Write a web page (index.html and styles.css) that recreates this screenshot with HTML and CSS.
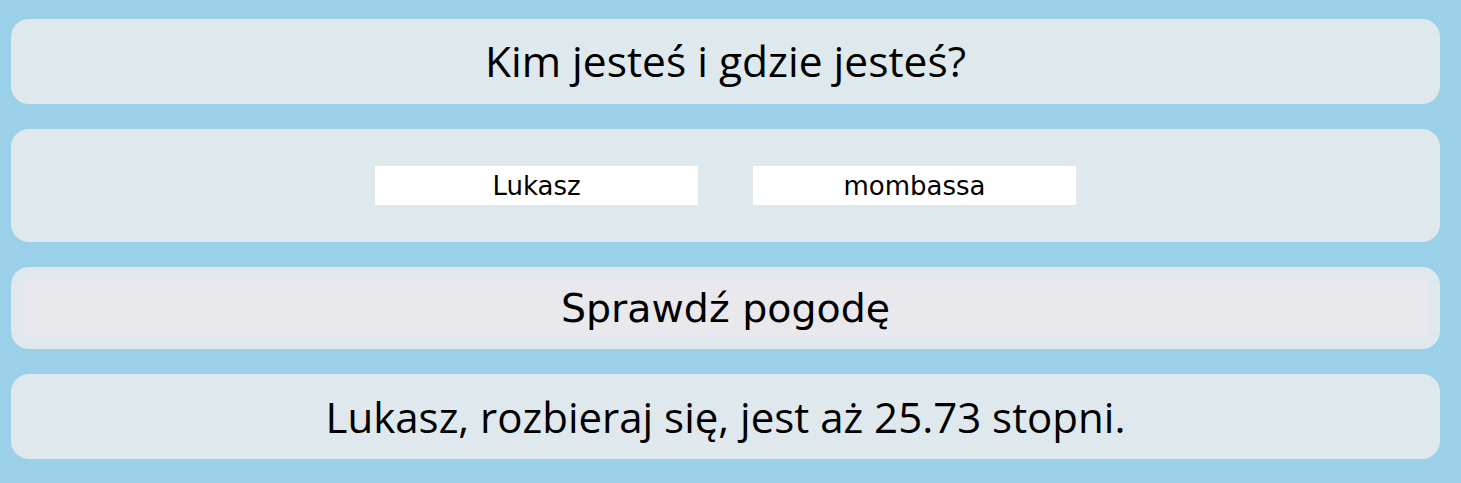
FILE: index.html
```html
<!DOCTYPE html>
<html lang="pl">
<head>
<meta charset="utf-8">
<title>Pogoda</title>
<link rel="stylesheet" href="styles.css">
</head>
<body>
<main class="app">
  <section class="card card-title">
    <h1 class="title">Kim jesteś i gdzie jesteś?</h1>
  </section>
  <section class="card card-form">
    <input class="field" type="text" value="Lukasz">
    <input class="field" type="text" value="mombassa">
  </section>
  <section class="card card-button">
    <button class="check" type="button">Sprawdź pogodę</button>
  </section>
  <section class="card card-result">
    <p class="result">Lukasz, rozbieraj się, jest aż 25.73 stopni.</p>
  </section>
</main>
</body>
</html>
```
FILE: styles.css
```css
html, body {
  margin: 0;
  padding: 0;
  background: #9ad1e8;
}
.app {
  display: flex;
  flex-direction: column;
  gap: 25px;
  padding: 19px 21px 24px 11px;
}
.card {
  background: #dfe8ec;
  border-radius: 18px;
  display: flex;
  align-items: center;
  justify-content: center;
}
.card-title { height: 85px; }
.card-form { height: 113px; gap: 55px; }
.card-button { height: 82px; padding: 13px; box-sizing: border-box; }
.card-result { height: 85px; }
.title, .result {
  margin: 0;
  font-family: "Open Sans", "Noto Sans", sans-serif;
  font-weight: 400;
  font-size: 42px;
  color: #000;
  line-height: 1;
}
.title { font-size: 42.5px; }
.field {
  width: 323px;
  height: 39px;
  box-sizing: border-box;
  border: none;
  outline: none;
  background: #fff;
  text-align: center;
  font-family: "DejaVu Sans", sans-serif;
  font-size: 26px;
  color: #000;
  padding: 0;
}
.check {
  width: 100%;
  height: 100%;
  border: none;
  background: #e8e8ed;
  font-family: "DejaVu Sans", sans-serif;
  font-size: 39.5px;
  color: #000;
  padding: 0;
}
```
